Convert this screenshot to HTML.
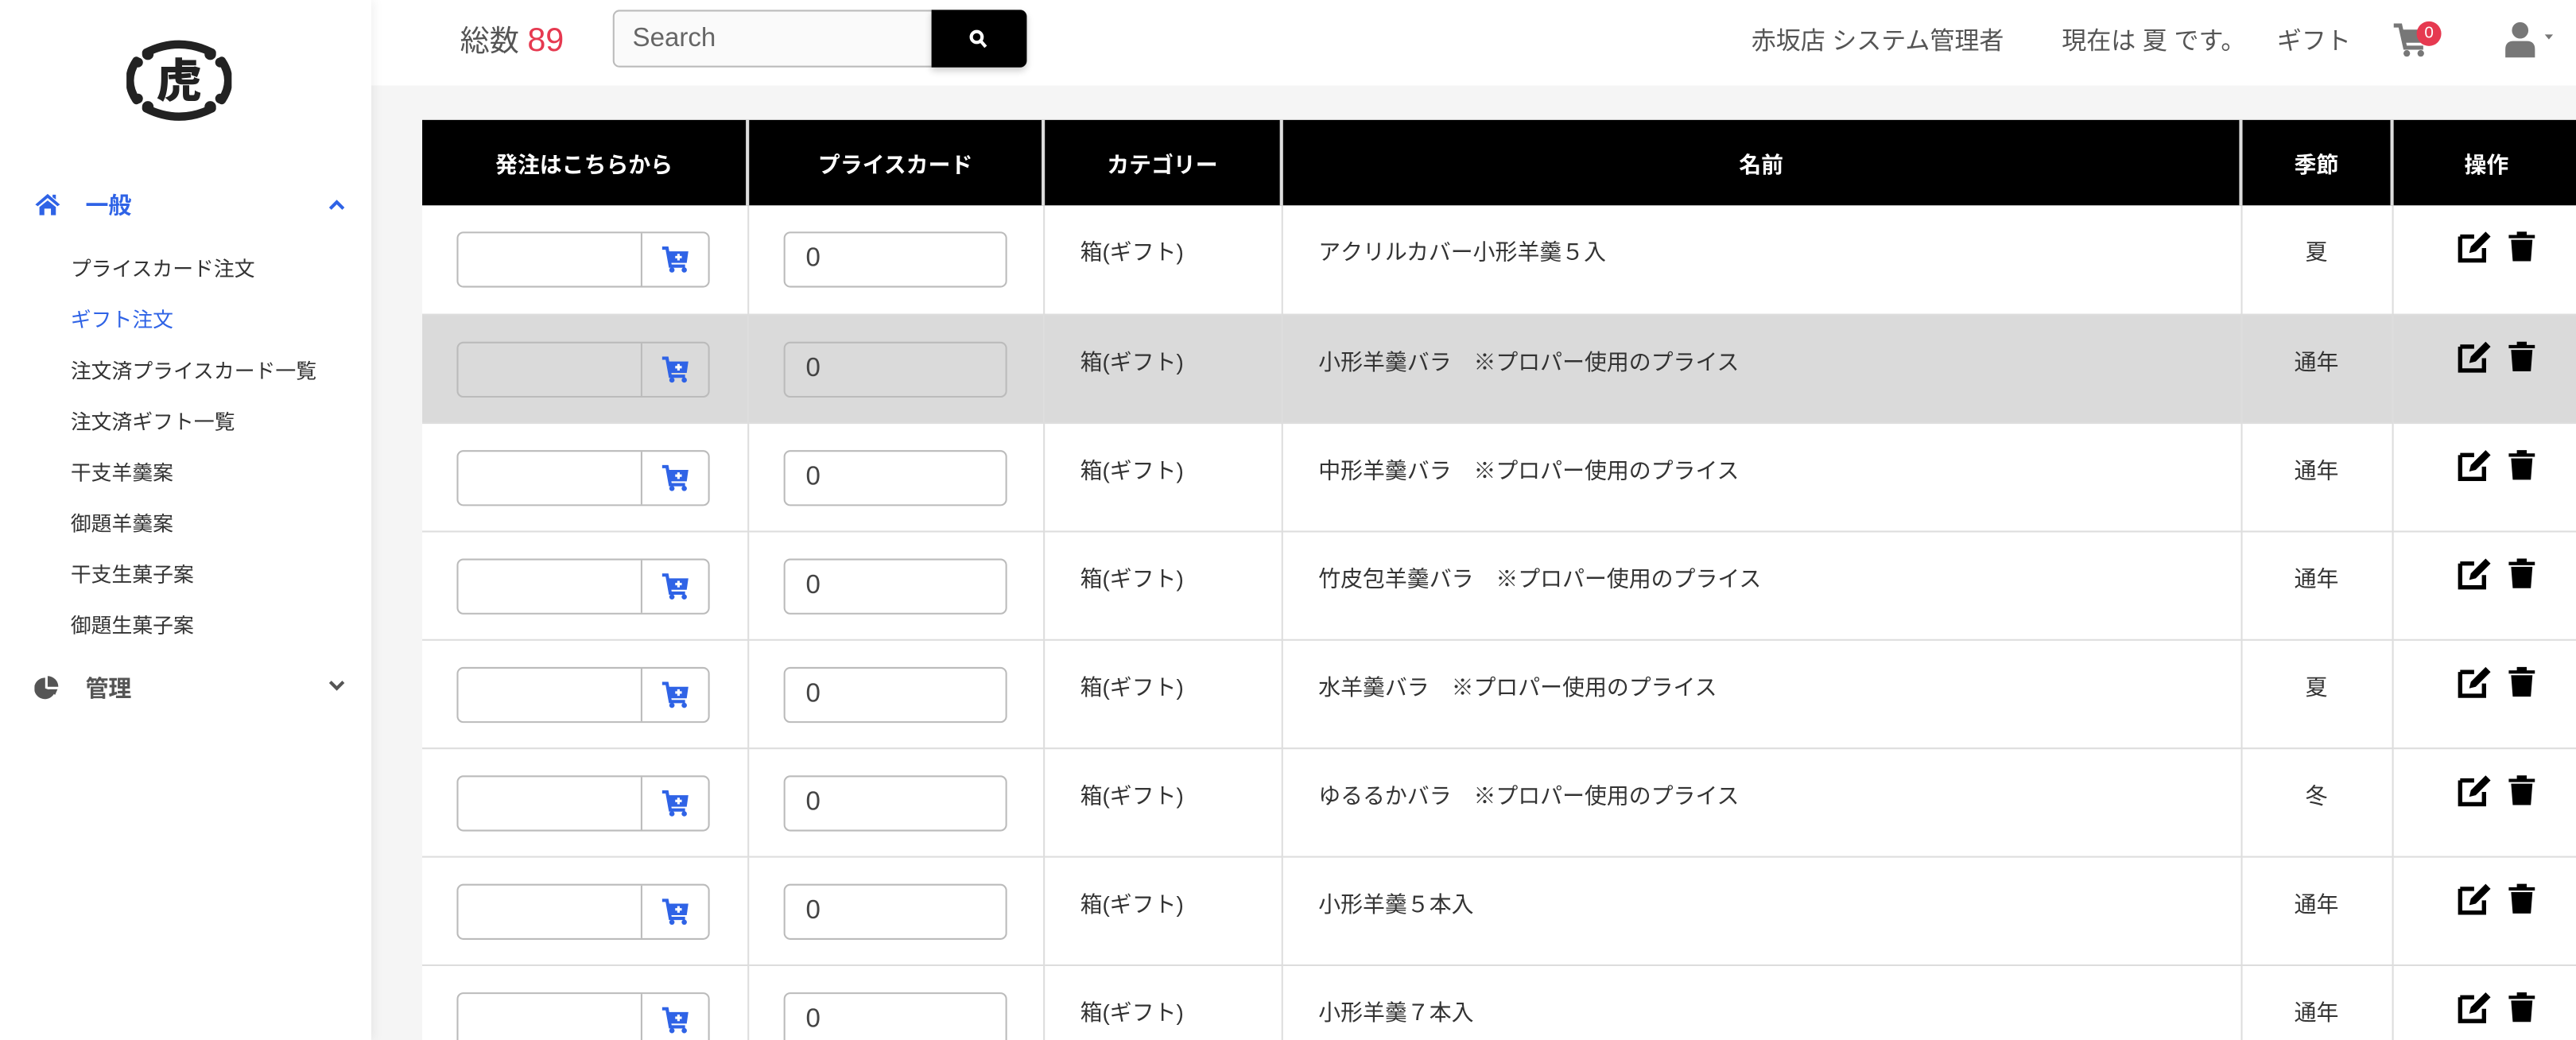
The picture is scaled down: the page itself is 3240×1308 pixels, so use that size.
<!DOCTYPE html>
<html><head><meta charset="utf-8"><style>
html,body{margin:0;padding:0;width:3240px;height:1308px;overflow:hidden;background:#fff;}
#w{width:1568px;height:633px;transform:scale(2.06633);transform-origin:0 0;position:relative;font-family:"Liberation Sans","Noto Sans CJK JP",sans-serif;color:#333;}
.side{position:absolute;left:0;top:0;width:226px;height:633px;background:#fff;box-shadow:2px 0 6px rgba(0,0,0,.06);z-index:2}
.main{position:absolute;left:226px;top:0;right:0;bottom:0;background:#f5f5f5}
.hdr{position:absolute;left:0;right:0;top:0;height:52px;background:#fff}
.ab{position:absolute;white-space:nowrap}
.nav a{display:block;position:absolute;left:43px;font-size:12.5px;color:#333}
table{position:absolute;left:31px;top:73px;border-collapse:collapse;background:#fff;font-size:13.5px;table-layout:fixed;width:1313px}
th{background:#000;color:#fff;font-weight:bold;height:52px;padding:0;border-right:2px solid #ddd;font-size:13.5px;box-sizing:border-box}
td{height:66px;border-right:1px solid #ddd;border-bottom:1px solid #ddd;vertical-align:top;padding:0;box-sizing:border-box}
tr.g td{background:#dadada}
.ig{margin:16px 0 0 21px;width:154px;height:34px;border:1px solid #bbb;border-radius:4px;box-sizing:border-box;display:flex}
.ig .a{flex:1;border-right:1px solid #bbb}
.ig .b{width:40px;display:flex;align-items:center;justify-content:center}
.pc{margin:16px 0 0 21px;width:136px;height:34px;border:1px solid #bbb;border-radius:4px;box-sizing:border-box;font-size:16px;padding:7px 0 0 13px;color:#444}
.t{padding:17px 0 0 22px}
.c{text-align:center;padding-top:17px}
</style></head><body><div id="w">
<div class="side">
 <svg class="ab" style="left:77px;top:24px" width="64" height="50" viewBox="0 0 64 50">
  <g fill="none" stroke="#222" stroke-width="5" stroke-linecap="round">
   <path d="M12 8 Q32 -2 52 8"/><path d="M12 42 Q32 52 52 42"/><path d="M6 13 Q-2 25 6 37"/><path d="M58 13 Q66 25 58 37"/></g>
  <g fill="#222"><circle cx="13" cy="9" r="3.5"/><circle cx="51" cy="9" r="3.5"/><circle cx="13" cy="41" r="3.5"/><circle cx="51" cy="41" r="3.5"/><circle cx="7" cy="14" r="3"/><circle cx="57" cy="14" r="3"/><circle cx="7" cy="36" r="3"/><circle cx="57" cy="36" r="3"/></g>
  <text x="32" y="35" text-anchor="middle" font-size="28" font-weight="900" font-family="Noto Sans CJK JP,sans-serif" fill="#222">虎</text>
 </svg>
 <svg class="ab" style="left:21px;top:117px" width="16" height="14" viewBox="0 0 16 14"><path d="M8 1 L0.5 7.5 L2 8.5 L8 3.5 L14 8.5 L15.5 7.5 Z M3 9 L8 5 L13 9 V14 H10 V10 H6 V14 H3 Z M11 1.5h2v3l-2-1.5z" fill="#2f63e6"/></svg>
 <div class="ab" style="left:52px;top:115px;font-size:14px;font-weight:bold;color:#2f63e6">一般</div>
 <svg class="ab" style="left:200px;top:121px" width="10" height="7" viewBox="0 0 10 7"><path d="M1 6 L5 2 L9 6" stroke="#2f63e6" stroke-width="2" fill="none"/></svg>
 <div class="nav">
  <a style="top:153px">プライスカード注文</a>
  <a style="top:184px;color:#2f63e6">ギフト注文</a>
  <a style="top:215px">注文済プライスカード一覧</a>
  <a style="top:246px">注文済ギフト一覧</a>
  <a style="top:277px">干支羊羹案</a>
  <a style="top:308px">御題羊羹案</a>
  <a style="top:339px">干支生菓子案</a>
  <a style="top:370px">御題生菓子案</a>
 </div>
 <svg class="ab" style="left:21px;top:411px" width="15" height="15" viewBox="0 0 15 15"><path d="M6.5 1.5 A6.5 6.5 0 1 0 12.5 10 L6.5 8 Z" fill="#555"/><path d="M8 0.5 A6.5 6.5 0 0 1 14.5 7 H8Z" fill="#555"/><path d="M8.5 8.5 L14 8.5 L12.5 12 Z" fill="#555"/></svg>
 <div class="ab" style="left:52px;top:409px;font-size:14px;font-weight:bold;color:#555">管理</div>
 <svg class="ab" style="left:200px;top:414px" width="10" height="7" viewBox="0 0 10 7"><path d="M1 1 L5 5 L9 1" stroke="#555" stroke-width="2" fill="none"/></svg>
</div>
<div class="main">
 <div class="hdr">
  <div class="ab" style="left:54px;top:11px;font-size:18px;color:#555">総数 <span style="color:#e63950;font-size:20px">89</span></div>
  <div class="ab" style="left:147px;top:6px;width:195px;height:35px;border:1px solid #bbb;border-radius:4px 0 0 4px;box-sizing:border-box;background:#fafafa;font-size:16px;color:#666;padding:8px 0 0 11px">Search</div>
  <div class="ab" style="left:341px;top:6px;width:58px;height:35px;background:#000;border-radius:0 4px 4px 0;box-shadow:0 2px 4px rgba(0,0,0,.2)"><svg style="position:absolute;left:23px;top:12px" width="11" height="12" viewBox="0 0 11 12"><circle cx="4.5" cy="4.5" r="3.3" stroke="#fff" stroke-width="2" fill="none"/><path d="M7 7 L10 10.5" stroke="#fff" stroke-width="2"/></svg></div>
  <div class="ab" style="left:840px;top:14px;font-size:15px;color:#555">赤坂店 システム管理者</div>
  <div class="ab" style="left:1029px;top:14px;font-size:15px;color:#555">現在は 夏 です。</div>
  <div class="ab" style="left:1160px;top:14px;font-size:15px;color:#555">ギフト</div>
  <svg class="ab" style="left:1231px;top:14px" width="24" height="22" viewBox="0 0 24 22"><path d="M0 1.5 H4 L7 15 H18" stroke="#777" stroke-width="2.5" fill="none"/><path d="M5 4 H20 L18 12 H6.5Z" fill="#777"/><circle cx="8" cy="18.5" r="2" fill="#777"/><circle cx="16.5" cy="18.5" r="2" fill="#777"/></svg>
  <div class="ab" style="left:1245px;top:13px;width:15px;height:15px;border-radius:50%;background:#e63950;color:#fff;font-size:10px;text-align:center;line-height:15px">0</div>
  <svg class="ab" style="left:1298px;top:13px" width="30" height="22" viewBox="0 0 30 22"><circle cx="10" cy="5.5" r="5" fill="#777"/><path d="M1 22 V17 Q1 12 6 12 H14 Q19 12 19 17 V22Z" fill="#777"/><path d="M25 8 H30 L27.5 11Z" fill="#777"/></svg>
 </div>
 <table>
  <colgroup><col style="width:198px"><col style="width:180px"><col style="width:145px"><col style="width:584px"><col style="width:92px"><col style="width:114px"></colgroup>
  <tr><th>発注はこちらから</th><th>プライスカード</th><th>カテゴリー</th><th>名前</th><th>季節</th><th style="border-right:0">操作</th></tr>
 </table>
</div>
</div>
<script>
var rows=[["アクリルカバー小形羊羹５入","夏"],["小形羊羹バラ　※プロパー使用のプライス","通年"],["中形羊羹バラ　※プロパー使用のプライス","通年"],["竹皮包羊羹バラ　※プロパー使用のプライス","通年"],["水羊羹バラ　※プロパー使用のプライス","夏"],["ゆるるかバラ　※プロパー使用のプライス","冬"],["小形羊羹５本入","通年"],["小形羊羹７本入","通年"]];
var cart='<svg width="17" height="16" viewBox="0 0 17 16"><path d="M0 1 H3 L5 12 H14" stroke="#2f63e6" stroke-width="2" fill="none"/><path d="M4 3 H16 L15 10 H5Z" fill="#2f63e6"/><path d="M10 4.5v4M8 6.5h4" stroke="#fff" stroke-width="1.5"/><circle cx="6" cy="14.3" r="1.6" fill="#2f63e6"/><circle cx="13.5" cy="14.3" r="1.6" fill="#2f63e6"/></svg>';
var ops='<svg width="22" height="20" viewBox="0 0 22 20"><path d="M1.5 4 H10 M1.5 4 V18.5 H16 V11" stroke="#000" stroke-width="2.6" fill="none"/><path d="M7 14 L8 10 L17 1 L20 4 L11 13Z" fill="#000"/></svg><svg style="margin-left:9px" width="16" height="20" viewBox="0 0 16 20"><path d="M0 3 H16 V5 H0Z M5 1 H11 V3 H5Z M1.5 6 H14.5 L13.5 19 H2.5Z" fill="#000"/></svg>';
var h='';rows.forEach(function(r,i){h+='<tr class="'+(i==1?'g':'')+'"><td><div class="ig"><div class="a"></div><div class="b">'+cart+'</div></div></td><td><div class="pc">0</div></td><td class="t">箱(ギフト)</td><td class="t">'+r[0]+'</td><td class="c">'+r[1]+'</td><td style="padding:15px 0 0 39px;border-right:0">'+ops+'</td></tr>';});
document.querySelector('table').insertAdjacentHTML('beforeend',h);
</script>
</body></html>
